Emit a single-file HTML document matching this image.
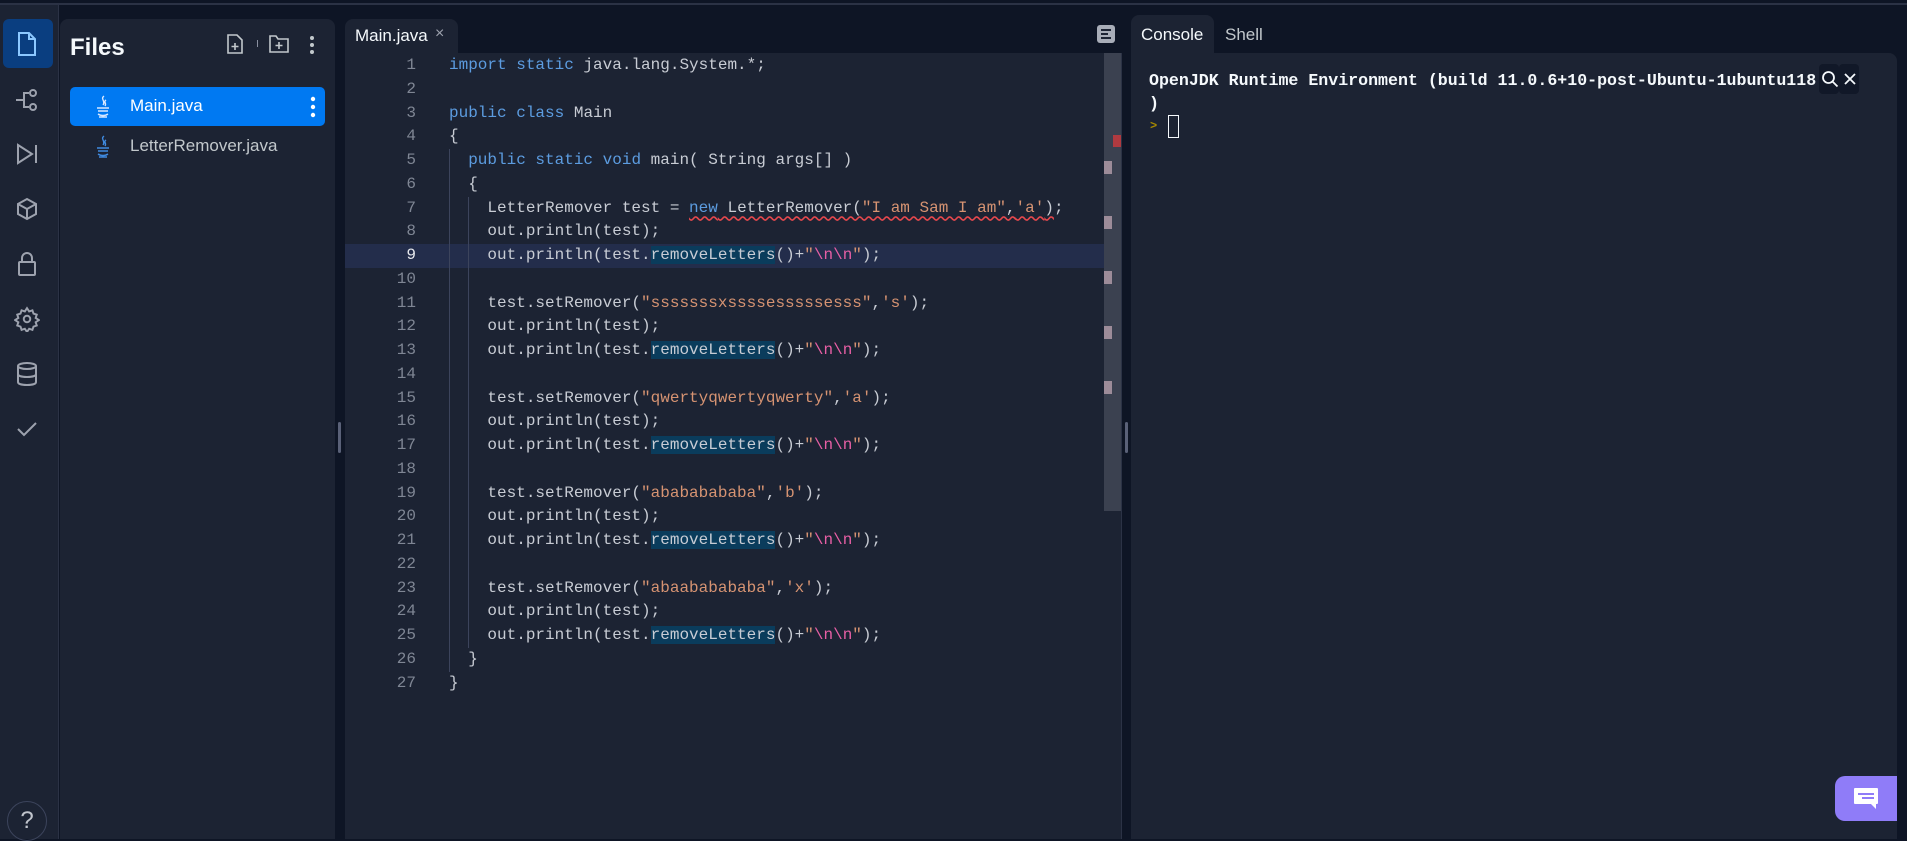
<!DOCTYPE html>
<html><head><meta charset="utf-8"><style>
*{margin:0;padding:0;box-sizing:border-box}
body{width:1907px;height:839px;background:#0e1525;position:relative;overflow:hidden;font-family:"Liberation Sans",sans-serif;color:#f5f9fc}
.abs{position:absolute}
#topline{left:0;top:3px;width:1907px;height:2px;background:#2b3245}
#bar{left:0;top:5px;width:59px;height:834px;background:#1c2333;border-right:1px solid #2b3245}
#files{left:60px;top:19px;width:275px;height:820px;background:#1c2333;border-radius:8px 8px 0 0}
#editor{left:345px;top:53px;width:776px;height:786px;background:#1c2333}
#etab{left:345px;top:19px;width:113px;height:35px;background:#1c2333;border-radius:8px 8px 0 0}
#ctab{left:1131px;top:15px;width:83px;height:39px;background:#1c2333;border-radius:8px 8px 0 0}
#console{left:1131px;top:53px;width:766px;height:786px;background:#1c2333;border-radius:0 8px 0 0}
.code{position:absolute;left:449px;top:54px;font-family:"Liberation Mono",monospace;font-size:16px;line-height:23.75px;color:#c8ccd4;white-space:pre}
.ln{position:absolute;left:345px;width:71px;top:54px;text-align:right;font-family:"Liberation Mono",monospace;font-size:16px;line-height:23.75px;color:#7f8694;white-space:pre}
.k{color:#5c9ce0}.s{color:#d69372}.e{color:#e85fa5}.h{background:#0a3c5c}
.u{text-decoration:underline wavy #e5484d;text-underline-offset:4px}
svg{position:absolute}
</style></head><body>
<div class="abs" id="topline"></div>
<div class="abs" id="bar"></div>
<div class="abs" style="left:3px;top:19px;width:50px;height:49px;background:#0a3e80;border-radius:6px"></div>
<svg style="left:15px;top:31px" width="24" height="26" viewBox="0 0 24 26" fill="none" stroke="#8cc8ff" stroke-width="2"><path d="M4 2h10l6 6v16H4z M14 2v6h6"/></svg>
<svg style="left:14px;top:88px" width="26" height="24" viewBox="0 0 26 24" fill="none" stroke="#9da2ae" stroke-width="2"><path d="M2 12h8 M10 12V5h5 M10 12v7h5"/><circle cx="19" cy="5" r="3"/><circle cx="19" cy="19" r="3"/></svg>
<svg style="left:15px;top:143px" width="24" height="22" viewBox="0 0 24 22" fill="none" stroke="#9da2ae" stroke-width="2"><path d="M3 2l14 9-14 9z M21 2v18"/></svg>
<svg style="left:15px;top:197px" width="24" height="24" viewBox="0 0 24 24" fill="none" stroke="#9da2ae" stroke-width="2"><path d="M12 2l9 5v10l-9 5-9-5V7z M3 7l9 5 9-5 M12 12v10"/></svg>
<svg style="left:17px;top:251px" width="20" height="26" viewBox="0 0 20 26" fill="none" stroke="#9da2ae" stroke-width="2"><rect x="2" y="11" width="16" height="13" rx="1"/><path d="M5 11V7a5 5 0 0 1 10 0v4"/></svg>
<svg style="left:14px;top:306px" width="26" height="26" viewBox="0 0 24 24" fill="none" stroke="#9da2ae" stroke-width="1.8"><circle cx="12" cy="12" r="3"/><path d="M12 2l2 3 3-1 1 3 3 1-1 3 3 2-3 2 1 3-3 1-1 3-3-1-2 3-2-3-3 1-1-3-3-1 1-3-3-2 3-2-1-3 3-1 1-3 3 1z"/></svg>
<svg style="left:16px;top:361px" width="22" height="26" viewBox="0 0 22 26" fill="none" stroke="#9da2ae" stroke-width="2"><ellipse cx="11" cy="5" rx="9" ry="3"/><path d="M2 5v16c0 2 4 3 9 3s9-1 9-3V5 M2 13c0 2 4 3 9 3s9-1 9-3"/></svg>
<svg style="left:16px;top:421px" width="22" height="16" viewBox="0 0 22 16" fill="none" stroke="#9da2ae" stroke-width="2"><path d="M2 8l6 6L20 2"/></svg>
<div class="abs" style="left:7px;top:801px;width:40px;height:40px;border:1px solid #3c445c;border-radius:50%;color:#c0c4cc;font-size:24px;text-align:center;line-height:38px">?</div>

<div class="abs" id="files"></div>
<div class="abs" style="left:70px;top:34px;font-size:24px;font-weight:bold;color:#f5f9fc">Files</div>
<svg style="left:227px;top:34px" width="16" height="20" viewBox="0 0 16 20" fill="none" stroke="#c2c8cc" stroke-width="1.6"><path d="M1 1h9l5 5v13H1z M8 9v7 M4.5 12.5h7"/></svg>
<div class="abs" style="left:257px;top:40px;width:1px;height:7px;background:#8a90a0"></div>
<svg style="left:269px;top:35px" width="20" height="18" viewBox="0 0 20 18" fill="none" stroke="#c2c8cc" stroke-width="1.6"><path d="M1 1h6l2 3h10v13H1z M10 7v7 M6.5 10.5h7"/></svg>
<svg style="left:308px;top:35px" width="8" height="20" viewBox="0 0 8 20" fill="#c2c8cc"><circle cx="4" cy="3" r="2"/><circle cx="4" cy="10" r="2"/><circle cx="4" cy="17" r="2"/></svg>
<div class="abs" style="left:70px;top:87px;width:255px;height:39px;background:#0079f2;border-radius:5px"></div>
<svg style="left:95px;top:95px" width="16" height="24" viewBox="0 0 16 24" fill="none" stroke="#d8e8ff" stroke-width="1.4"><path d="M9 1c-4 3 2 5-1 9 M11 5c-3 2 1 3-1 6 M2 13h12 M3 16h10 M3 19c3 2 7 2 10 0 M4 22h8"/></svg>
<div class="abs" style="left:130px;top:96px;font-size:17px;color:#fff">Main.java</div>
<svg style="left:309px;top:96px" width="8" height="22" viewBox="0 0 8 22" fill="#fff"><circle cx="4" cy="3" r="2.2"/><circle cx="4" cy="11" r="2.2"/><circle cx="4" cy="19" r="2.2"/></svg>
<svg style="left:95px;top:135px" width="16" height="24" viewBox="0 0 16 24" fill="none" stroke="#3f8ae0" stroke-width="1.4"><path d="M9 1c-4 3 2 5-1 9 M11 5c-3 2 1 3-1 6 M2 13h12 M3 16h10 M3 19c3 2 7 2 10 0 M4 22h8"/></svg>
<div class="abs" style="left:130px;top:136px;font-size:17px;color:#c2c8cc">LetterRemover.java</div>

<div class="abs" style="left:338px;top:422px;width:3px;height:31px;background:#5a6178;border-radius:2px"></div>
<div class="abs" style="left:1125px;top:422px;width:3px;height:31px;background:#5a6178;border-radius:2px"></div>

<div class="abs" id="etab"></div>
<div class="abs" style="left:355px;top:26px;font-size:17px;color:#f5f9fc">Main.java</div>
<div class="abs" style="left:435px;top:25px;font-size:16px;color:#9da2ae">×</div>
<div class="abs" style="left:1097px;top:25px;width:18px;height:18px;background:#a8adb8;border-radius:3px"></div>
<div class="abs" style="left:1101px;top:29px;width:10px;height:2px;background:#1c2333"></div>
<div class="abs" style="left:1101px;top:33px;width:7px;height:2px;background:#1c2333"></div>
<div class="abs" style="left:1101px;top:37px;width:10px;height:2px;background:#1c2333"></div>
<div class="abs" id="editor"></div>
<div class="abs" style="left:345px;top:244px;width:759px;height:24px;background:#232d4b"></div>
<div class="abs" style="left:449px;top:149px;width:1px;height:523px;background:#3c445c"></div>
<div class="abs" style="left:468px;top:197px;width:1px;height:451px;background:#3c445c"></div>
<div class="abs" style="left:1104px;top:53px;width:17px;height:458px;background:#3b4150"></div>
<div class="abs" style="left:1121px;top:53px;width:1px;height:786px;background:#2b3245"></div>
<div class="abs" style="left:1113px;top:135px;width:8px;height:12px;background:#b03a40"></div>
<div class="abs" style="left:1104px;top:161px;width:8px;height:13px;background:#9d8c99"></div>
<div class="abs" style="left:1104px;top:216px;width:8px;height:13px;background:#9d8c99"></div>
<div class="abs" style="left:1104px;top:271px;width:8px;height:13px;background:#9d8c99"></div>
<div class="abs" style="left:1104px;top:326px;width:8px;height:13px;background:#9d8c99"></div>
<div class="abs" style="left:1104px;top:381px;width:8px;height:13px;background:#9d8c99"></div>
<div class="ln">1
2
3
4
5
6
7
8
<span style="color:#e8eaee">9</span>
10
11
12
13
14
15
16
17
18
19
20
21
22
23
24
25
26
27</div>
<div class="code"><span class="k">import</span> <span class="k">static</span> java.lang.System.*;

<span class="k">public</span> <span class="k">class</span> Main
{
  <span class="k">public</span> <span class="k">static</span> <span class="k">void</span> main( String args[] )
  {
    LetterRemover test = <span class="u"><span class="k">new</span> LetterRemover(<span class="s">"I am Sam I am"</span>,<span class="s">'a'</span>)</span>;
    out.println(test);
    out.println(test.<span class="h">removeLetters</span>()+<span class="s">"</span><span class="e">\n\n</span><span class="s">"</span>);

    test.setRemover(<span class="s">"sssssssxssssesssssesss"</span>,<span class="s">'s'</span>);
    out.println(test);
    out.println(test.<span class="h">removeLetters</span>()+<span class="s">"</span><span class="e">\n\n</span><span class="s">"</span>);

    test.setRemover(<span class="s">"qwertyqwertyqwerty"</span>,<span class="s">'a'</span>);
    out.println(test);
    out.println(test.<span class="h">removeLetters</span>()+<span class="s">"</span><span class="e">\n\n</span><span class="s">"</span>);

    test.setRemover(<span class="s">"abababababa"</span>,<span class="s">'b'</span>);
    out.println(test);
    out.println(test.<span class="h">removeLetters</span>()+<span class="s">"</span><span class="e">\n\n</span><span class="s">"</span>);

    test.setRemover(<span class="s">"abaababababa"</span>,<span class="s">'x'</span>);
    out.println(test);
    out.println(test.<span class="h">removeLetters</span>()+<span class="s">"</span><span class="e">\n\n</span><span class="s">"</span>);
  }
}</div>

<div class="abs" id="ctab"></div>
<div class="abs" style="left:1141px;top:25px;font-size:17px;color:#f5f9fc">Console</div>
<div class="abs" style="left:1225px;top:25px;font-size:17px;color:#c2c8cc">Shell</div>
<div class="abs" id="console"></div>
<div class="abs" style="left:1149px;top:69px;font-family:'Liberation Mono',monospace;font-weight:bold;font-size:16.6px;line-height:23px;color:#f5f9fc;white-space:pre;width:668px;overflow:hidden">OpenJDK Runtime Environment (build 11.0.6+10-post-Ubuntu-1ubuntu118
)</div>
<div class="abs" style="left:1150px;top:119px;font-family:'Liberation Mono',monospace;font-weight:bold;font-size:12px;color:#a88a00">&gt;</div>
<div class="abs" style="left:1168px;top:115px;width:11px;height:23px;border:1.5px solid #f5f9fc"></div>
<div class="abs" style="left:1819px;top:64px;width:20px;height:30px;background:#111828;border-radius:4px"></div>
<div class="abs" style="left:1839px;top:64px;width:20px;height:30px;background:#111828;border-radius:4px"></div>
<svg style="left:1821px;top:70px" width="18" height="18" viewBox="0 0 18 18" fill="none" stroke="#f5f9fc" stroke-width="1.8"><circle cx="7.5" cy="7.5" r="5.5"/><path d="M11.5 11.5l5 5"/></svg>
<svg style="left:1843px;top:72px" width="14" height="14" viewBox="0 0 14 14" fill="none" stroke="#f5f9fc" stroke-width="1.8"><path d="M2 2l10 10 M12 2L2 12"/></svg>

<div class="abs" style="left:1835px;top:776px;width:62px;height:45px;background:#8f7cf8;border-radius:10px 0 0 10px"></div>
<svg style="left:1853px;top:787px" width="26" height="24" viewBox="0 0 26 24"><path d="M2 1h22a1 1 0 0 1 1 1v14a1 1 0 0 1-1 1h-1v5l-5-5H2a1 1 0 0 1-1-1V2a1 1 0 0 1 1-1z" fill="#fff"/><rect x="5" y="6" width="16" height="2" fill="#8f7cf8"/><rect x="9" y="10" width="12" height="2" fill="#8f7cf8"/></svg>
</body></html>
